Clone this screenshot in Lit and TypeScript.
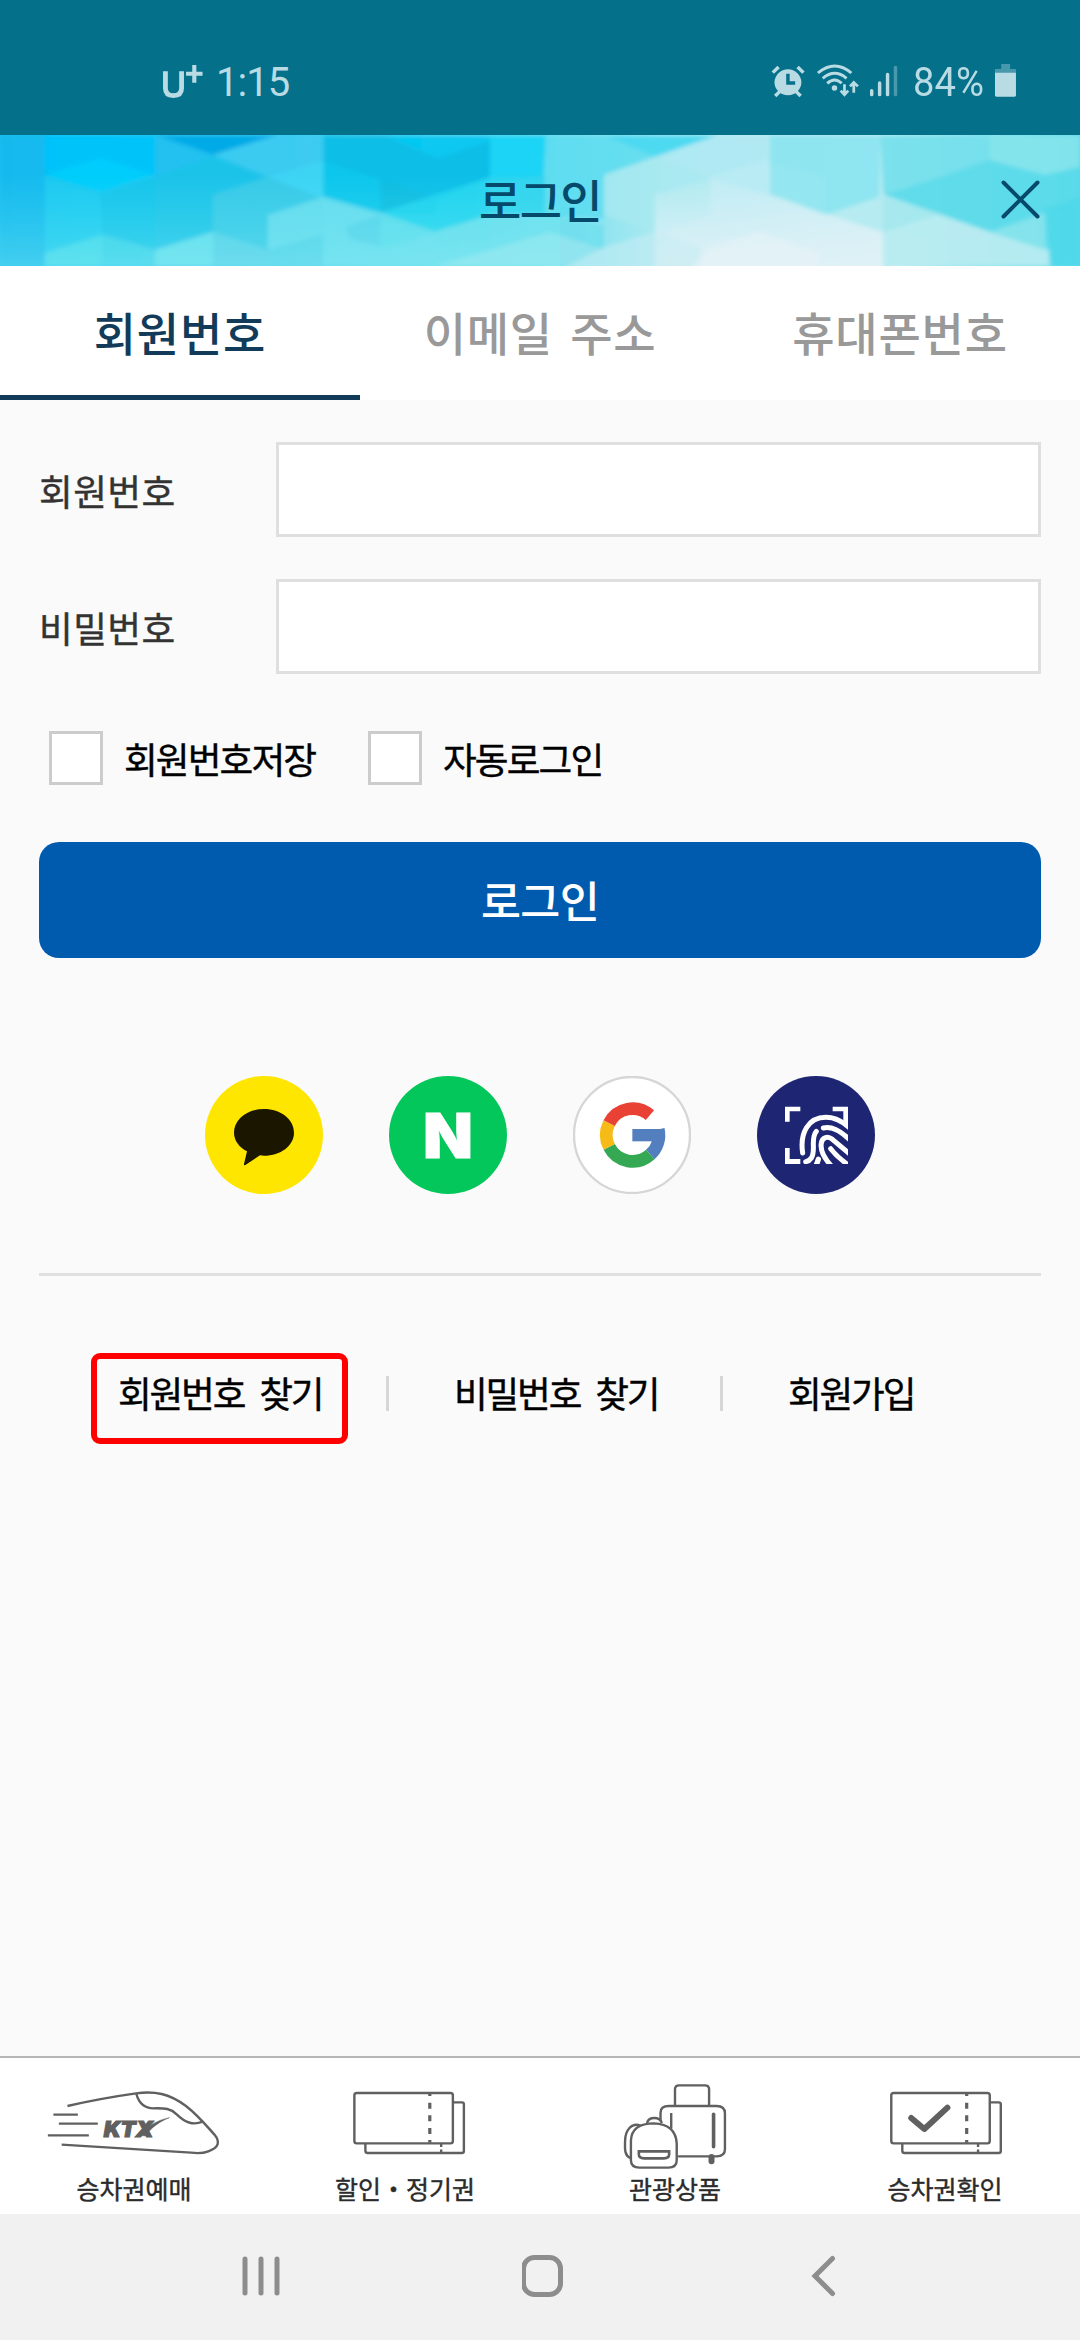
import { LitElement, html, svg, css } from "lit";
import { customElement, state } from "lit/decorators.js";
import { classMap } from "lit/directives/class-map.js";

const FONT = css`"Noto Sans CJK KR", "Noto Sans", sans-serif`;

@customElement("status-bar")
class StatusBar extends LitElement {
  static styles = css`
    :host { display: flex; box-sizing: border-box; height: 135px; padding: 58px 63px 0 162px;
      background: #04708a; color: #b9dbe4; font-family: Roboto, sans-serif; align-items: flex-start; }
    .carrier { width: 54px; height: 50px; display: flex; align-items: flex-start; }
    .time { font-size: 40px; line-height: 50px; letter-spacing: -1px; }
    .right { margin-left: auto; display: flex; align-items: flex-start; }
    .pct { font-size: 40px; line-height: 50px; margin-left: 12px; width: 80px; transform-origin: left; transform: scaleX(0.955); white-space: nowrap; }
    svg { display: block; margin-top: 5px; height: 37px; }
    .carrier svg { width: 45px; }
    .icons { width: 131px; }
    .battery { width: 22px; margin-left: 2px; }
  `;
  render() {
    return html`
      <div class="carrier">
        <svg viewBox="470 190 131 111" preserveAspectRatio="none" fill="none" stroke="#b9dbe4">
          <path d="M480 215V266Q480 288 503 288Q527 288 527 266V215" stroke-width="14" />
          <path d="M540 222H588M564 196V249" stroke-width="12" />
        </svg>
      </div>
      <div class="time">1:15</div>
      <div class="right">
        <svg class="icons" viewBox="662 190 380 111" preserveAspectRatio="none">
          <g fill="none" stroke="#b9dbe4" stroke-width="10">
            <path d="M670 219L687 202M759 219L742 202M677 289L690 276M751 289L738 276" />
            <circle cx="714" cy="248" r="39" fill="#b9dbe4" stroke="none" />
            <path d="M714 222V250H735" stroke="#04708a" stroke-width="10" />
            <path d="M801 220Q850 178 898 220M815 236Q850 206 884 236M828 251Q850 231 870 251" stroke-width="8.5" />
            <circle cx="849" cy="265" r="8" fill="#b9dbe4" stroke="none" />
            <path d="M878 254V284M867 273L878 285L889 273M905 279V249M894 260L905 248L917 260" stroke-width="8" />
          </g>
          <g stroke="#b9dbe4" stroke-width="10" stroke-linecap="round">
            <path d="M957 273V285M980 250V285M1003 224V285" />
            <path d="M1026 203V285" opacity=".38" />
          </g>
        </svg>
        <div class="pct">84%</div>
        <svg class="battery" viewBox="1324 190 64 111" preserveAspectRatio="none">
          <path d="M1342 193H1368V208H1385V220H1324V208H1342Z" fill="#b9dbe4" opacity=".38" />
          <path d="M1324 219H1385V287Q1385 291 1381 291H1328Q1324 291 1324 287Z" fill="#b9dbe4" />
        </svg>
      </div>`;
  }
}

const FACETS: [string, string, number?][] = [
  ["0,0 45,0 45,131 0,131", "#14b2ee", 0.5],
  ["45,0 155,0 155,40 100,57 45,40", "#00c2fb"],
  ["45,40 100,23 155,40 100,57", "#00cefb"],
  ["155,0 278,0 213,20", "#02a7e6"],
  ["155,0 213,20 155,42", "#1fc0f0"],
  ["213,20 278,0 323,0 323,26 268,42", "#3ccbf1"],
  ["45,42 100,59 102,100 45,118", "#1cccf2", 0.7],
  ["100,59 155,42 155,115 102,97", "#16c3ea"],
  ["155,42 213,20 268,42 213,60 213,97 155,115", "#1ac2e8"],
  ["268,42 323,26 323,64", "#3ed4f4"],
  ["213,60 268,42 323,64 323,100 268,115 213,97", "#38c9e7"],
  ["323,0 385,0 437,23 490,6 490,42 437,65 435,80 380,78 323,62", "#09bce6"],
  ["385,0 490,0 490,6 437,23", "#00c7f1"],
  ["323,26 380,44 380,80 323,62", "#0cc8ee", 0.8],
  ["380,44 425,58 420,66 384,78", "#0abbe0", 0.8],
  ["490,0 546,0 544,42 490,48", "#14d2f5"],
  ["380,78 435,60 490,42 490,80 435,97", "#20d2ef"],
  ["490,42 545,42 545,80 490,80", "#2cd2ee"],
  ["268,80 323,62 380,78 435,97 435,131 323,131 323,100 268,115", "#72deef", 0.8],
  ["345,92 380,80 380,112 350,104", "#4ecde8", 0.6],
  ["380,78 435,97 490,80 490,112 435,97 380,115", "#5adbec", 0.7],
  ["435,97 490,80 545,80 604,90 604,131 435,131", "#6fdfee", 0.8],
  ["435,131 490,115 550,97 604,115 604,131", "#9de6f0", 0.7],
  ["45,118 102,100 102,131 45,131", "#4cdcec", 0.8],
  ["102,100 155,115 155,131 102,131", "#3fd3ea", 0.8],
  ["155,115 213,97 213,131 155,131", "#6be0ed", 0.9],
  ["213,97 268,115 268,131 213,131", "#5bd0e8", 0.9],
  ["268,115 323,100 323,131 268,131", "#5ad2ea", 0.8],
  ["546,0 604,0 655,22 604,40 604,84 545,80", "#5cdcf0", 0.85],
  ["604,0 718,0 655,22", "#45d8f1"],
  ["655,22 718,0 770,0 770,60 710,42", "#aee9f3", 0.8],
  ["604,40 655,22 710,42 710,80 655,97 604,80", "#a8e8f0", 0.8],
  ["710,42 770,24 770,62 715,80", "#bcebf4", 0.8],
  ["770,0 880,0 880,62 825,80 770,58", "#8ae4f0"],
  ["770,28 825,42 825,78 770,60", "#98e6f0", 0.6],
  ["880,0 990,0 990,25 940,42 883,60", "#74dfec"],
  ["883,60 940,42 990,25 1045,40 1080,32 1080,70 1045,78 990,97 937,78", "#5adae9"],
  ["990,0 1080,0 1080,32 1045,40 990,25", "#84e4ec"],
  ["825,80 883,62 883,97", "#b4eaf1"],
  ["883,62 937,78 990,97 940,105 883,97", "#a4e7ee"],
  ["883,97 937,80 990,97 1050,115 1050,131 883,131", "#b8ebf1"],
  ["937,78 990,97 1045,78 1045,115 990,97", "#86e3ec"],
  ["1045,74 1080,62 1080,131 1050,131", "#4fd8e9"],
];

@customElement("title-bar")
class TitleBar extends LitElement {
  static styles = css`
    :host { display: grid; height: 131px; overflow: hidden; font-family: ${FONT}; }
    .art, .row { grid-area: 1 / 1; }
    .art { display: block; width: 1080px; height: 131px; }
    .row { display: grid; grid-template-columns: 110px 1fr 110px; align-items: center; z-index: 1; }
    h1 { margin: 0; padding-bottom: 6px; text-align: center; font-weight: 500; font-size: 46px; line-height: 60px; letter-spacing: -1.6px; color: #064a6b; }
    button { border: 0; background: none; padding: 0; width: 110px; height: 131px; }
    .x { display: block; width: 110px; height: 131px; }
  `;
  render() {
    return html`
      <svg class="art" viewBox="0 0 1080 131">
        <defs>
          <linearGradient id="b" x2="1"><stop offset="0" stop-color="#12c0ee" /><stop offset=".3" stop-color="#3fd0ee" /><stop offset=".5" stop-color="#6fdfee" /><stop offset=".62" stop-color="#b4eaf2" /><stop offset=".8" stop-color="#c8eef4" /><stop offset="1" stop-color="#4ad8ea" /></linearGradient>
          <linearGradient id="v" x2="0" y2="1"><stop offset=".3" stop-color="#5cf0f4" stop-opacity="0" /><stop offset="1" stop-color="#8ff0f2" stop-opacity=".38" /></linearGradient>
          <linearGradient id="p" x2="0" y2="1"><stop offset="0" stop-color="#e6f2f7" stop-opacity=".15" /><stop offset=".7" stop-color="#e2f2f7" stop-opacity=".85" /><stop offset="1" stop-color="#e4f3f7" /></linearGradient>
          <filter id="soft" x="0" y="0" width="1" height="1"><feGaussianBlur stdDeviation="2.2" /></filter>
        </defs>
        <rect width="1080" height="131" fill="url(#b)" />
        <g filter="url(#soft)">
          <rect x="-20" y="-20" width="1120" height="171" fill="url(#b)" />
          ${FACETS.map(([p, c, o]) => svg`<polygon points=${p} fill=${c} opacity=${o ?? 0.92} />`)}
          <path d="M655 60L710 44L768 60L883 97V135H655Z" fill="url(#p)" opacity=".85" />
          <path d="M560 135L604 112L655 97L700 112V135Z" fill="#c6edf4" opacity=".6" />
          <path d="M710 112L760 97L820 118L820 135H690Z" fill="#e8f3f8" opacity=".6" />
        </g>
        <rect width="560" height="131" fill="url(#v)" />
      </svg>
      <div class="row">
        <span></span>
        <h1>로그인</h1>
        <button aria-label="닫기">
          <svg class="x" viewBox="970 0 110 131"><path d="M1003.5 47.5L1037.5 81.5M1037.5 47.5L1003.5 81.5" stroke="#064a6b" stroke-width="4" stroke-linecap="round" /></svg>
        </button>
      </div>`;
  }
}

@customElement("login-tabs")
class LoginTabs extends LitElement {
  @state() active = 0;
  static styles = css`
    :host { display: grid; grid-template-columns: repeat(3, 1fr); height: 134px; background: #fff; }
    .tab { border: 0; border-bottom: 5px solid transparent; background: none; padding: 0; color: #999;
      font: 500 46px/60px ${FONT}; letter-spacing: .8px; word-spacing: 6px; }
    .tab.active { color: #123b5a; border-bottom-color: #123b5a; }
  `;
  render() {
    return ["회원번호", "이메일 주소", "휴대폰번호"].map(
      (t, i) => html`<button class=${classMap({ tab: true, active: i === this.active })} @click=${() => (this.active = i)}>${t}</button>`
    );
  }
}

@customElement("login-form")
class LoginForm extends LitElement {
  static styles = css`
    :host { display: block; padding: 42px 39px 0; font-family: ${FONT}; }
    .field { display: grid; grid-template-columns: 237px 1fr; align-items: center; height: 95px; margin-bottom: 42px; }
    label { font-size: 36.7px; line-height: 50px; letter-spacing: .4px; color: #333; -webkit-text-stroke: .4px #333; }
    input { box-sizing: border-box; width: 100%; height: 95px; border: 3px solid #dfdfdf; background: #fff; outline: 0; border-radius: 0; }
    .checks { display: flex; height: 54px; align-items: center; padding-left: 10px; margin-top: 57px; }
    .check { display: flex; align-items: center; width: 319px; font-size: 36.7px; line-height: 50px; letter-spacing: -1.9px; color: #000; white-space: nowrap; -webkit-text-stroke: .4px #000; }
    .box { box-sizing: border-box; width: 54px; height: 54px; border: 3.5px solid #ccc; background: #fff; margin-right: 21px; }
    .submit { display: block; width: 1002px; height: 116px; margin-top: 57px; border: 0; border-radius: 20px; background: #005bae; color: #fff;
      font: 500 43.5px/60px ${FONT}; letter-spacing: -.7px; padding: 0 0 1px; }
  `;
  render() {
    return html`
      ${["회원번호", "비밀번호"].map((l, i) => html`<div class="field"><label for="f${i}">${l}</label><input id="f${i}" type=${i ? "password" : "text"} /></div>`)}
      <div class="checks">${["회원번호저장", "자동로그인"].map((l) => html`<div class="check"><span class="box"></span>${l}</div>`)}</div>
      <button class="submit">로그인</button>`;
  }
}

@customElement("social-logins")
class SocialLogins extends LitElement {
  static styles = css`
    :host { display: flex; justify-content: center; gap: 66px; margin: 118px 39px 0; padding-bottom: 79px; border-bottom: 3px solid #e0e0e0; }
    svg { display: block; width: 118px; height: 118px; }
    .n { font: 900 62px Inter, sans-serif; }
  `;
  render() {
    return html`
      <svg viewBox="0 0 354 354"><circle cx="177" cy="177" r="177" fill="#ffe600" />
        <path d="M177 99C227 99 267 130 267 170C267 209 227 239 177 239L165 238L121 267Q116 269 117 264L126 226C102 213 87 193 87 170C87 130 127 99 177 99Z" fill="#1b1600" /></svg>
      <svg viewBox="0 0 118 118"><circle cx="59" cy="59" r="59" fill="#03c75a" />
        <text class="n" x="59" y="81.5" text-anchor="middle" textLength="50" lengthAdjust="spacingAndGlyphs" fill="#fff" stroke="#fff" stroke-width=".8">N</text></svg>
      <svg viewBox="0 0 354 354"><circle cx="177" cy="177" r="174" fill="#fff" stroke="#d6d6d6" stroke-width="7" />
        <g transform="translate(179 177)" fill="none" stroke-width="38">
          <path d="M52.9 58.7A79 79 0 0 0 77 -17" stroke="#537fbf" />
          <path d="M-1 -18H94V19H-1Z" fill="#537fbf" stroke="none" />
          <path d="M-70.4 35.9A79 79 0 0 0 52.9 58.7" stroke="#34a853" />
          <path d="M-70.4 -35.9A79 79 0 0 0 -70.4 35.9" stroke="#f6bb17" />
          <path d="M51.8 -59.6A79 79 0 0 0 -70.4 -35.9" stroke="#e94235" />
        </g></svg>
      <svg viewBox="0 0 354 354"><circle cx="177" cy="177" r="177" fill="#1e2673" />
        <clipPath id="cut"><path d="M0 0H216V204H0Z" /></clipPath>
        <g transform="translate(57 60)" clip-path="url(#cut)">
          <path d="M27 32H73V46H41V77H27ZM170 32H216V100L202 88V46H170ZM27 156H41V189H73V204H27Z" fill="#fff" />
          <g fill="none" stroke="#fff" stroke-width="15" stroke-linecap="round">
            <path d="M80 171C71 112 96 64 150 64C178 64 202 78 224 98" />
            <path d="M142 96C170 89 198 108 224 134" />
            <path d="M121 106C102 128 121 164 106 186Q99 196 89 197" />
            <path d="M168 212C145 188 132 163 136 141C139 124 155 119 169 130C187 145 202 158 226 178" />
            <path d="M164 158Q184 184 220 209" />
            <path d="M127 190L120 210" stroke-width="16" />
          </g>
        </g></svg>`;
  }
}

@customElement("account-links")
class AccountLinks extends LitElement {
  static styles = css`
    :host { display: grid; grid-template-columns: 257px 79px 255px 79px 200px; align-items: center; margin: 77px 0 0 91px; height: 91px;
      font: 400 36.7px/50px ${FONT}; letter-spacing: -2.2px; word-spacing: 9px; -webkit-text-stroke: .4px #000; }
    a { color: #000; padding-left: 21px; height: 91px; box-sizing: border-box; line-height: 67px; white-space: nowrap; border: 6px solid transparent; border-radius: 9px; }
    a.marked { border-color: #f00; }
    .sep { justify-self: center; width: 3px; height: 35px; background: #d6d6d6; margin-top: -10px; }
  `;
  render() {
    return html`<a class="marked">회원번호 찾기</a><span class="sep"></span><a>비밀번호 찾기</a><span class="sep"></span><a>회원가입</a>`;
  }
}

const tickets = svg`
  <path d="M1316 187H1341Q1347 187 1347 193V333Q1347 339 1341 339H1068Q1061 339 1061 332V310" />
  <path d="M1281 312V339" stroke-width="2.4" stroke-dasharray="3 2.5" />
  <rect x="1029" y="159" width="286" height="151" rx="7" />
  <path d="M1248 161V168M1248 188V206M1248 226V244M1248 264V282M1248 300V308" stroke-width="3.2" />`;

@customElement("bottom-menu")
class BottomMenu extends LitElement {
  static styles = css`
    :host { display: grid; grid-template-columns: repeat(4, 270px); box-sizing: border-box; height: 158px; margin-top: auto; border-top: 2px solid #b5b5b5; background: #fff; }
    .item { display: flex; flex-direction: column; align-items: center; }
    svg { display: block; width: 270px; height: 114px; flex: none; fill: none; stroke: #606060; stroke-width: 2.4; }
    svg * { vector-effect: non-scaling-stroke; }
    .ktx { font: italic 900 65px Inter, sans-serif; fill: #606060; stroke: #606060; stroke-width: 1.2; }
    .label { font: 400 25px/36px ${FONT}; margin-top: -2px; color: #2b2b2b; -webkit-text-stroke: .4px #2b2b2b; white-space: nowrap; }
    .item:first-child .label { padding-right: 2px; }
  `;
  render() {
    const icons = [
      html`<svg viewBox="0 54 784 342" preserveAspectRatio="none">
        <path d="M196 198C270 180 340 168 395 160C450 153 490 160 540 198C575 226 603 261 622 283Q650 318 605 334Q585 342 555 338L179 314" />
        <path d="M396 162C404 192 420 205 446 205C475 205 493 203 513 223C540 250 562 256 589 245" />
        <path d="M155 224H226M171 251H284M139 286H258" />
        <text class="ktx" x="301" y="290" textLength="144" lengthAdjust="spacingAndGlyphs">KTX</text>
        <path d="M407 286C430 257 455 241 492 233C458 247 437 266 422 288Z" fill="#606060" stroke-width=".5" />
      </svg>`,
      html`<svg viewBox="784 54 784 342" preserveAspectRatio="none">${tickets}</svg>`,
      html`<svg viewBox="0 54 784 342" preserveAspectRatio="none">
        <path d="M392 197V148Q392 136 404 136H479Q491 136 491 148V197" />
        <path d="M350 244V218Q350 198 374 198H513Q537 198 537 220V328Q537 349 513 349H401M381 219V266" />
        <path d="M504 223V320" stroke-width="3.6" stroke-linecap="round" />
        <path d="M498 351V364" stroke-width="6" stroke-linecap="round" />
        <path d="M262 354C243 345 247 320 247 304C247 270 266 247 292 257M311 249Q314 234 332 234Q349 234 354 249" />
        <path d="M264 302Q266 250 331 250Q394 253 397 310V361Q397 383 373 383H289Q264 383 264 361Z" />
        <path d="M287 334H375V343Q375 355 360 355H302Q287 355 287 343Z" stroke-width="2.6" />
      </svg>`,
      html`<svg viewBox="784 54 784 342" preserveAspectRatio="none"><g transform="translate(-9 0)">${tickets}
        <path d="M1087 234L1125 267L1192 203" stroke-width="6" stroke-linecap="round" stroke-linejoin="round" /></g></svg>`,
    ];
    return ["승차권예매", "할인・정기권", "관광상품", "승차권확인"].map((l, i) => html`<div class="item">${icons[i]}<div class="label">${l}</div></div>`);
  }
}

@customElement("system-nav")
class SystemNav extends LitElement {
  static styles = css`
    :host { display: flex; box-sizing: border-box; height: 126px; background: #f1f1f1; align-items: center; padding: 0 0 2px 240px; }
    svg { display: block; fill: none; stroke: #8d8d8d; stroke-width: 5; stroke-linecap: round; height: 46px; }
  `;
  render() {
    return html`
      <svg width="282" viewBox="240 2253 282 46"><path d="M245 2259V2293M261 2259V2293M277 2259V2293" /></svg>
      <svg width="284" viewBox="522 2253 284 46"><rect x="523.5" y="2257.5" width="37" height="37" rx="11" /></svg>
      <svg width="40" viewBox="806 2253 40 46"><path d="M832.5 2258.5L815 2276L832.5 2293.5" /></svg>`;
  }
}

@customElement("app-root")
class AppRoot extends LitElement {
  static styles = css`
    :host { display: flex; flex-direction: column; width: 1080px; height: 2340px; background: #fafafa; overflow: hidden; }
  `;
  render() {
    return html`<status-bar></status-bar><title-bar></title-bar><login-tabs></login-tabs><login-form></login-form>
      <social-logins></social-logins><account-links></account-links><bottom-menu></bottom-menu><system-nav></system-nav>`;
  }
}
